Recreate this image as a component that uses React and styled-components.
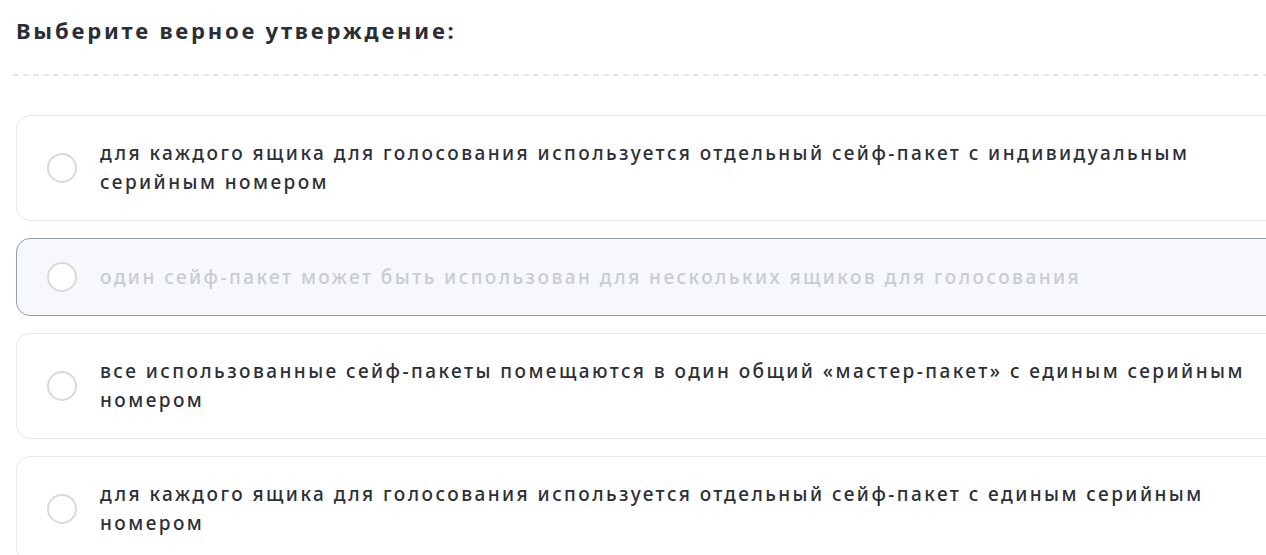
import React from 'react';
import styled, { createGlobalStyle } from 'styled-components';

const GlobalStyle = createGlobalStyle`
  body {
    margin: 0;
    background: #fff;
    overflow: hidden;
    font-family: 'Noto Sans', 'Open Sans', sans-serif;
  }
`;

const StyledQuestion = styled.section`
  width: 1300px;
  padding: 14px 0 0 16px;
`;

const Title = styled.h2`
  margin: 0;
  font-size: 22px;
  font-weight: 700;
  letter-spacing: 2.8px;
  line-height: 32px;
  color: #2a2e36;
`;

const Divider = styled.div`
  height: 2px;
  margin: 28px 0 0 -3px;
  background: repeating-linear-gradient(90deg, #e4e6e9 0 6px, transparent 6px 10px);
`;

const Options = styled.div`
  display: flex;
  flex-direction: column;
  gap: 17px;
  margin-top: 39px;
`;

const Option = styled.label`
  display: flex;
  align-items: center;
  gap: 23px;
  padding: 23px 24px 23px 30px;
  border: 1.5px solid ${({ $active }) => ($active ? '#8e9bb0' : '#e6e8eb')};
  border-radius: 14px;
  background: ${({ $active }) => ($active ? '#f6f8fb' : '#fff')};
  cursor: pointer;
`;

const Radio = styled.span`
  flex: none;
  width: 26px;
  height: 26px;
  border: 2px solid #d7d9dd;
  border-radius: 50%;
  background: #fff;
`;

const Text = styled.span`
  font-size: 19px;
  font-weight: 500;
  letter-spacing: 2.45px;
  line-height: 29px;
  color: ${({ $muted }) => ($muted ? '#c7ccd3' : '#2b2f37')};
`;

const options = [
  'для каждого ящика для голосования используется отдельный сейф-пакет с индивидуальным серийным номером',
  'один сейф-пакет может быть использован для нескольких ящиков для голосования',
  'все использованные сейф-пакеты помещаются в один общий «мастер-пакет» с единым серийным номером',
  'для каждого ящика для голосования используется отдельный сейф-пакет с единым серийным номером',
];

const App = () => (
  <>
    <GlobalStyle />
    <StyledQuestion>
      <Title>Выберите верное утверждение:</Title>
      <Divider />
      <Options>
        {options.map((text, i) => (
          <Option key={i} $active={i === 1}>
            <Radio />
            <Text $muted={i === 1}>{text}</Text>
          </Option>
        ))}
      </Options>
    </StyledQuestion>
  </>
);

export default App;
